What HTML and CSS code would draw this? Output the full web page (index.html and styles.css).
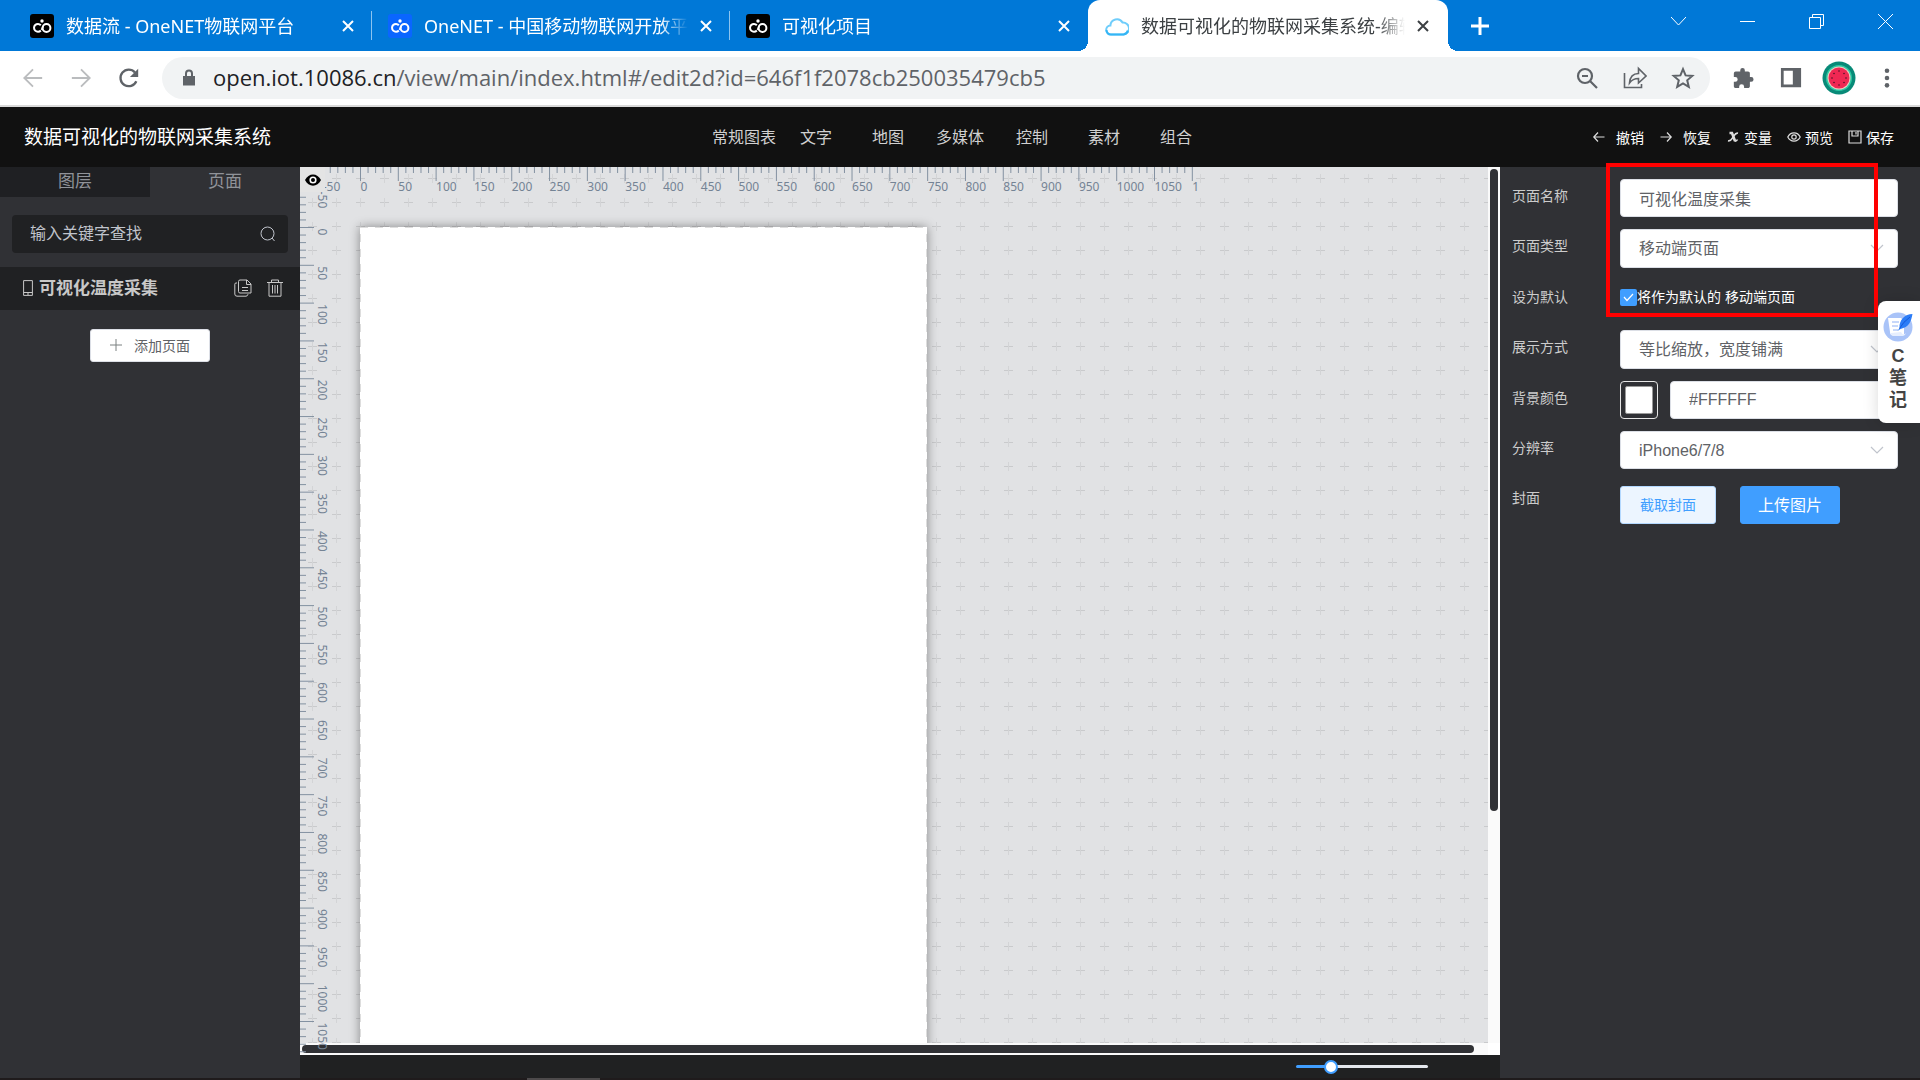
FILE: index.html
```html
<!DOCTYPE html>
<html lang="zh-CN">
<head>
  <meta charset="UTF-8" />
  <meta name="viewport" content="width=device-width, initial-scale=1.0"/>
  <title>数据可视化的物联网采集系统-编辑</title>
  <link rel="stylesheet" href="styles.css">
</head>
<body>
  <svg class="sprite" aria-hidden="true">
    <symbol id="onenet" viewBox="0 0 24 24">
      <path d="M10.8 11.2a3.900 3.900 0 1 0 0 5.300" fill="none" stroke="#fff" stroke-width="2"/>
      <circle cx="16.500" cy="14" r="3.900" fill="none" stroke="#fff" stroke-width="2"/>
      <path d="M13.200 12.200L11.500 15.800" stroke="#fff" stroke-width="1.600"/>
      <circle cx="12" cy="7" r="1.700" fill="#fff"/>
    </symbol>
    <symbol id="close" viewBox="0 0 12 12">
      <path d="M1 1l10 10M11 1L1 11" fill="none" stroke="currentColor" stroke-width="2"/>
    </symbol>
  </svg>

  <!-- browser tabs -->
  <header class="tab-strip">
    <div class="tab">
      <svg class="favicon dark"><use href="#onenet"/></svg>
      <span class="tab-title">数据流 - OneNET物联网平台</span>
      <button class="tab-close" aria-label="关闭"><svg><use href="#close"/></svg></button>
    </div>
    <div class="tab">
      <svg class="favicon blue"><use href="#onenet"/></svg>
      <span class="tab-title">OneNET - 中国移动物联网开放平</span>
      <button class="tab-close" aria-label="关闭"><svg><use href="#close"/></svg></button>
    </div>
    <div class="tab last">
      <svg class="favicon dark"><use href="#onenet"/></svg>
      <span class="tab-title">可视化项目</span>
      <button class="tab-close" aria-label="关闭"><svg><use href="#close"/></svg></button>
    </div>
    <div class="tab active">
      <svg class="favicon" viewBox="0 0 24 24" fill="none" stroke-width="2">
        <path d="M6 20.500a4.500 4.500 0 0 1-.6-9A6.500 6.500 0 0 1 17.500 8.500a5.500 5.500 0 0 1 1 12z" stroke="#6fcdfb"/>
        <path d="M1.500 16a4.500 4.500 0 0 0 4.500 4.500h12.500a5 5 0 0 0 4.300-4" stroke="#35b5f5"/>
      </svg>
      <span class="tab-title">数据可视化的物联网采集系统-编辑</span>
      <button class="tab-close" aria-label="关闭"><svg><use href="#close"/></svg></button>
    </div>
    <button class="new-tab" aria-label="新标签页">
      <svg viewBox="0 0 18 18"><path d="M9 0v18M0 9h18" stroke="#fff" stroke-width="3"/></svg>
    </button>
    <div class="window-buttons">
      <button aria-label="搜索标签页"><svg viewBox="0 0 15 15"><path d="M0 3l7.500 8L15 3"/></svg></button>
      <button aria-label="最小化"><svg viewBox="0 0 15 15"><path d="M0 7.500h15"/></svg></button>
      <button aria-label="还原"><svg viewBox="0 0 15 15"><path d="M.5 3.500h11v11H.5zM3.500 3.500v-3h11v11h-3"/></svg></button>
      <button aria-label="关闭窗口"><svg viewBox="0 0 15 15"><path d="M0 0l15 15M15 0L0 15"/></svg></button>
    </div>
  </header>

  <!-- address bar -->
  <div class="toolbar">
    <button class="cell faded" aria-label="后退"><svg viewBox="0 0 24 24"><path d="M22 12H3M12 2.500L2.500 12l9.500 9.500" fill="none" stroke="currentColor" stroke-width="2"/></svg></button>
    <button class="cell faded" aria-label="前进"><svg viewBox="0 0 24 24"><path d="M2 12h19M12 2.500l9.500 9.500-9.500 9.500" fill="none" stroke="currentColor" stroke-width="2"/></svg></button>
    <button class="cell" aria-label="重新加载"><svg viewBox="0 0 24 24"><path d="M20 15.500A9 9 0 1 1 18.500 6" fill="none" stroke="currentColor" stroke-width="2.500"/><path d="M22 2v9h-9z" fill="currentColor"/></svg></button>
    <div class="omnibox">
      <svg class="lock" viewBox="0 0 12 18"><path d="M0 7h12v9.500H0z" fill="#5f6368"/><path d="M3 8V4.500a3 3 0 0 1 6 0V8" fill="none" stroke="#5f6368" stroke-width="2"/></svg>
      <span class="url"><span class="host">open.iot.10086.cn</span>/view/main/index.html#/edit2d?id=646f1f2078cb250035479cb5</span>
      <button class="cell" aria-label="缩放"><svg viewBox="0 0 24 24" fill="none" stroke="currentColor" stroke-width="2.200"><circle cx="10" cy="10" r="7"/><path d="M15 15l7 7M7 10h6"/></svg></button>
      <button class="cell" aria-label="分享"><svg viewBox="0 0 24 24" fill="none" stroke="currentColor" stroke-width="1.600"><path d="M1.500 7v14.500h17V18"/><path d="M6.500 17c.5-6 4-9.500 9-9.500V2.500L23 10l-7.500 7v-4.500c-4 0-6.500 1-9 4.500z"/></svg></button>
      <button class="cell" aria-label="加入收藏"><svg viewBox="0 0 24 24" fill="none" stroke="currentColor" stroke-width="2"><path d="M12 3.200l2.600 6.200 6.700.5-5.100 4.400 1.600 6.500L12 17.300l-5.800 3.500 1.600-6.500-5.100-4.400 6.700-.5z"/></svg></button>
    </div>
    <button class="cell" aria-label="扩展程序"><svg viewBox="0 0 24 24"><path d="M21 11h-1.500V7c0-1.100-.9-2-2-2H14V3.500a2.500 2.500 0 0 0-5 0V5H4a2 2 0 0 0-2 2v3.800h1.500a2.700 2.700 0 0 1 0 5.400H2V21c0 1.100.9 2 2 2h3.800v-1.500a2.700 2.700 0 0 1 5.400 0V23h4.300c1.100 0 2-.9 2-2v-5H21a2.500 2.500 0 0 0 0-5z" fill="currentColor"/></svg></button>
    <button class="cell" aria-label="侧边栏"><svg viewBox="0 0 24 24"><path d="M1 1h22v21H1zM4 4v15h10V4z" fill="currentColor" fill-rule="evenodd"/></svg></button>
    <button class="cell avatar" aria-label="个人资料">
      <svg viewBox="0 0 34 34">
        <circle cx="17" cy="17" r="16.500" fill="#088a78"/><circle cx="17" cy="17" r="13" fill="#2cc9a4"/><circle cx="17" cy="17" r="11.500" fill="#eecbbf"/><circle cx="17" cy="17" r="10.500" fill="#ef2853"/>
        <g fill="#4a1426"><circle cx="17" cy="10" r=".8"/><circle cx="17" cy="24" r=".8"/><circle cx="10" cy="17" r=".8"/><circle cx="24" cy="17" r=".8"/><circle cx="12" cy="12.500" r=".8"/><circle cx="22" cy="12.500" r=".8"/><circle cx="12" cy="21.500" r=".8"/><circle cx="22" cy="21.500" r=".8"/></g>
      </svg>
    </button>
    <button class="cell" aria-label="菜单"><svg viewBox="0 0 24 24" fill="currentColor"><circle cx="12" cy="4" r="2.500"/><circle cx="12" cy="12" r="2.500"/><circle cx="12" cy="20" r="2.500"/></svg></button>
  </div>

  <!-- editor header -->
  <div class="app-header">
    <h1>数据可视化的物联网采集系统</h1>
    <nav>
      <a href="#">常规图表</a>
      <a href="#">文字</a>
      <a href="#">地图</a>
      <a href="#">多媒体</a>
      <a href="#">控制</a>
      <a href="#">素材</a>
      <a href="#">组合</a>
    </nav>
    <div class="actions">
      <button class="wide"><svg viewBox="0 0 14 14"><path d="M12.500 7H2M6 2.500L1.800 7 6 11.500"/></svg>撤销</button>
      <button class="wide"><svg viewBox="0 0 14 14"><path d="M1.500 7H12M8 2.500L12.200 7 8 11.500"/></svg>恢复</button>
      <button><svg viewBox="0 0 14 14"><path d="M3.500 3h2.500l3 8" stroke-width="2.600"/><path d="M12 3.200C9.500 2.500 8.500 5 7 7.200S4.500 11.500 2 10.800M8.500 11q2 .5 3-1.500" stroke-width="1.600"/></svg>变量</button>
      <button><svg viewBox="0 0 14 14"><path d="M.8 7C3.500 1.500 10.500 1.500 13.200 7 10.500 12.500 3.500 12.500.8 7z"/><circle cx="7" cy="7" r="2.200"/></svg>预览</button>
      <button><svg viewBox="0 0 14 14"><path d="M1 1h12v12H1zM4 1v5h6V1M8 2v2.500"/></svg>保存</button>
    </div>
  </div>

  <main class="editor">
    <aside class="left-panel">
      <div class="panel-tabs">
        <button class="inactive">图层</button>
        <button>页面</button>
      </div>
      <div class="search">
        <input type="text" placeholder="输入关键字查找" aria-label="输入关键字查找" />
        <svg viewBox="0 0 16 16"><circle cx="7.500" cy="7.500" r="6.500"/><path d="M12 12l2.500 3"/></svg>
      </div>
      <div class="page-item">
        <svg class="phone" viewBox="0 0 10 16"><path d="M.6.600h8.800v14.800H.6zM.6 12.500h8.800M4 14h2"/></svg>
        <span class="page-name">可视化温度采集</span>
        <button aria-label="复制"><svg viewBox="0 0 18 18"><path d="M6 1h7l4 4v9H6q-1.500 0-1.500-1.500v-10Q4.500 1 6 1zM12.500 1v4.500H17M8 8.500h6M8 11.500h6M3 4H2q-1.200 0-1.200 1.200V15q0 2.200 2.200 2.200h9q1.500 0 2-2"/></svg></button>
        <button aria-label="删除"><svg viewBox="0 0 18 18"><path d="M1 3.500h16M5.500 3V1h7v2M3 4v13.200h12V4M6.500 6v8.500M9 6v8.500M11.500 6v8.500"/></svg></button>
      </div>
      <button class="add-page"><svg viewBox="0 0 12 12"><path d="M6 0v12M0 6h12"/></svg>添加页面</button>
    </aside>

    <section class="center">
      <div class="workspace">
        <div class="stage">
          <div class="artboard"></div>
        </div>
        <div class="track vertical"><div class="thumb"></div></div>
        <div class="track horizontal"><div class="thumb"></div></div>
        <div class="scroll-corner"></div>
        <svg class="ruler ruler-x" id="rulerX"></svg>
        <svg class="ruler ruler-y" id="rulerY"></svg>
        <button class="ruler-toggle" aria-label="显示标尺">
          <svg viewBox="0 0 16 12"><path d="M0 6C3.500-1.500 12.500-1.500 16 6 12.500 13.500 3.500 13.500 0 6z"/><circle cx="8" cy="6" r="3.600" fill="#fff"/><circle cx="8" cy="6" r="2"/></svg>
        </button>
      </div>
      <div class="zoom-bar">
        <input type="range" min="0" max="100" value="24" aria-label="缩放比例" />
      </div>
    </section>

    <aside class="right-panel">
      <form>
        <div class="row">
          <label for="pageName">页面名称</label>
          <input class="field" type="text" id="pageName" value="可视化温度采集" />
        </div>
        <div class="row">
          <label for="pageType">页面类型</label>
          <select class="field" id="pageType"><option>移动端页面</option></select>
        </div>
        <div class="row">
          <span class="label">设为默认</span>
          <div class="check">
            <input type="checkbox" id="isDefault" checked />
            <label for="isDefault">将作为默认的 移动端页面</label>
          </div>
        </div>
        <div class="row">
          <label for="display">展示方式</label>
          <select class="field" id="display"><option>等比缩放，宽度铺满</option></select>
        </div>
        <div class="row">
          <label for="bgHex">背景颜色</label>
          <div class="color">
            <input type="color" value="#ffffff" aria-label="选择颜色" />
            <input class="field" type="text" id="bgHex" value="#FFFFFF" />
          </div>
        </div>
        <div class="row">
          <label for="resolution">分辨率</label>
          <select class="field short" id="resolution"><option>iPhone6/7/8</option></select>
        </div>
        <div class="row">
          <span class="label">封面</span>
          <div class="cover">
            <button type="button" class="plain">截取封面</button>
            <button type="button" class="primary">上传图片</button>
          </div>
        </div>
      </form>
      <div class="highlight"></div>
      <button class="notes">
        <svg viewBox="0 0 30 30">
          <circle cx="15" cy="15" r="14.500" fill="#a9c3f8"/>
          <path d="M5 6h13l3 3v14H9q-2 0-2-3z" fill="#fff"/>
          <path d="M18 20q2 4 5 1-1 3-3 3H10q-2 0-2-3z" fill="#e6eefe"/>
          <path d="M9 10h7M9 14h6M10 18h5" stroke="#8fb0f5"/>
          <path d="M29.500 2C22 2 16 8 16.500 16l-2 3 3-2C26 15 28 10 29.500 2z" fill="#2b7cf7"/>
          <path d="M27 5Q20 10 16.500 16.500" fill="none" stroke="#1557d8"/>
        </svg>
        <span>C</span>
        <span>笔</span>
        <span>记</span>
      </button>
    </aside>
  </main>
  <div class="taskbar"><div class="taskbar-item"></div></div>

  <script>
    const SVG_NS = "http://www.w3.org/2000/svg";
    const SCALE = 0.7562; // screen px per page unit
    const ORIGIN = 60;    // page origin, from the edge of the workspace

    function add(parent, name, attrs, text) {
      const el = document.createElementNS(SVG_NS, name);
      for (const key in attrs) el.setAttribute(key, attrs[key]);
      if (text !== undefined) el.textContent = text;
      parent.appendChild(el);
    }

    function drawRuler(svg, from, to, vertical) {
      for (let v = from; v <= to; v += 10) {
        const pos = ORIGIN + v * SCALE + 0.5;
        const major = v % 50 === 0;
        const len = major ? 14 : 6;
        add(svg, "line", vertical
          ? { x1: 0, x2: len, y1: pos, y2: pos }
          : { x1: pos, x2: pos, y1: 0, y2: len });
        if (major) {
          // only the first digit of the label fits at the end of the top ruler
          const label = !vertical && v === to ? String(v)[0] : v;
          add(svg, "text", vertical
            ? { transform: `translate(18 ${pos + 1}) rotate(90)` }
            : { x: pos, y: 24 }, label);
        }
      }
    }

    drawRuler(document.getElementById("rulerX"), -50, 1100, false);
    drawRuler(document.getElementById("rulerY"), -50, 1090, true);
  </script>
</body>
</html>
```
FILE: styles.css
```css
:root {
  --blue: #0078d7;
  --primary: #409eff;
  --panel: #303135;
  --panel-dark: #202123;
  --icon: #5f6368;
}

* {
  box-sizing: border-box;
}

body {
  margin: 0;
  height: 100vh;
  display: flex;
  flex-direction: column;
  overflow: hidden;
  font-family: "Liberation Sans", "Noto Sans CJK SC", sans-serif;
  font-size: 14px;
  background: var(--panel);
}

button {
  padding: 0;
  border: none;
  background: none;
  color: inherit;
  font: inherit;
  white-space: nowrap;
  cursor: pointer;
}

input,
select {
  font: inherit;
  margin: 0;
}

svg {
  display: block;
  flex: none;
}

.sprite {
  display: none;
}

/* browser tabs */
.tab-strip {
  display: flex;
  flex: none;
  height: 51px;
  padding-left: 14px;
  background: var(--blue);
  color: #fff;
  font-family: "Noto Sans", "Noto Sans CJK SC", sans-serif;
  font-size: 18px;
}

.tab {
  display: flex;
  align-items: center;
  flex: 0 1 358px;
  min-width: 0;
  height: 51px;
  padding-left: 16px;
}

.tab::after {
  content: "";
  width: 1px;
  height: 29px;
  margin-left: 11px;
  background: #8cc4f0;
}

.tab.last::after,
.tab.active::after {
  background: none;
}

.favicon {
  width: 24px;
  height: 24px;
  margin-right: 12px;
  border-radius: 3px;
}

.favicon.dark {
  background: #000;
}

.favicon.blue {
  background: #0a66ff;
}

.tab-title {
  flex: 1;
  overflow: hidden;
  white-space: nowrap;
  line-height: 26px;
  -webkit-mask-image: linear-gradient(to left, transparent, #000 28px);
  mask-image: linear-gradient(to left, transparent, #000 28px);
}

.tab-close {
  display: flex;
  align-items: center;
  justify-content: center;
  width: 24px;
  height: 24px;
  margin-left: 6px;
}

.tab-close svg {
  width: 12px;
  height: 12px;
}

.tab.active {
  position: relative;
  flex-basis: 360px;
  padding-left: 17px;
  background: #fff;
  color: #3c4043;
  border-radius: 12px 12px 0 0;
}

.tab.active::after {
  margin-left: 12px;
}

.tab.active::before {
  content: "";
  position: absolute;
  left: -10px;
  right: -10px;
  bottom: 0;
  height: 10px;
  background:
    radial-gradient(circle at 0 0, transparent 10px, #fff 10px) left / 10px 10px no-repeat,
    radial-gradient(circle at 100% 0, transparent 10px, #fff 10px) right / 10px 10px no-repeat;
}

.new-tab {
  width: 18px;
  margin-left: 23px;
}

.new-tab svg {
  width: 18px;
  height: 18px;
}

.window-buttons {
  display: flex;
  margin-left: auto;
}

.window-buttons button {
  display: flex;
  justify-content: center;
  align-items: center;
  width: 69px;
  height: 43px;
}

.window-buttons svg {
  width: 15px;
  height: 15px;
  fill: none;
  stroke: #fff;
}

/* address bar */
.toolbar {
  display: flex;
  align-items: center;
  flex: none;
  height: 56px;
  padding: 0 9px;
  background: #fff;
  border-bottom: 2px solid #dadada;
}

.cell {
  display: flex;
  justify-content: center;
  align-items: center;
  width: 48px;
  height: 42px;
  color: var(--icon);
}

.cell svg {
  width: 24px;
  height: 24px;
}

.toolbar > .cell svg {
  width: 22px;
  height: 22px;
}

.faded {
  color: #babcbe;
}

.toolbar > .avatar svg {
  width: 34px;
  height: 34px;
}

.omnibox {
  display: flex;
  align-items: center;
  flex: 1;
  height: 42px;
  margin: 0 9px;
  padding: 0 3px 0 21px;
  background: #f1f3f4;
  border-radius: 21px;
}

.lock {
  width: 12px;
  height: 18px;
  margin-right: 18px;
}

.url {
  flex: 1;
  padding-bottom: 2px;
  color: var(--icon);
  font-family: "Open Sans", "Noto Sans", sans-serif;
  font-size: 22px;
  line-height: 30px;
  white-space: nowrap;
}

.host {
  color: #202124;
}

/* editor header */
.app-header {
  display: grid;
  grid-template-columns: 1fr auto 1fr;
  align-items: center;
  flex: none;
  height: 60px;
  padding: 0 24px;
  background: #111;
  color: #fff;
}

.app-header h1 {
  margin: 0;
  padding-bottom: 4px;
  font-size: 19px;
  font-weight: 400;
}

.app-header nav {
  display: flex;
  padding-bottom: 3px;
}

.app-header nav a {
  width: 72px;
  color: #d0d0d0;
  font-size: 16px;
  text-align: center;
  text-decoration: none;
  white-space: nowrap;
}

.actions {
  display: flex;
  justify-content: flex-end;
  gap: 15px;
  padding-right: 2px;
}

.actions button {
  display: flex;
  align-items: center;
  gap: 4px;
}

.actions .wide {
  gap: 10px;
}

.actions svg {
  width: 14px;
  height: 14px;
  fill: none;
  stroke: #ddd;
  stroke-width: 1.2;
}

/* editor body */
.editor {
  display: flex;
  flex: 1;
  min-height: 0;
}

.left-panel {
  flex: none;
  width: 300px;
  background: var(--panel);
}

.panel-tabs {
  display: flex;
}

.panel-tabs button {
  flex: 1;
  height: 30px;
  color: #909399;
  font-size: 17px;
  line-height: 30px;
}

.panel-tabs .inactive {
  background: #1f2023;
}

.search {
  display: flex;
  align-items: center;
  height: 38px;
  margin: 18px 12px 14px;
  padding: 0 12px 0 18px;
  background: var(--panel-dark);
  border-radius: 4px;
}

.search input {
  flex: 1;
  min-width: 0;
  padding: 0;
  border: none;
  outline: none;
  background: none;
  color: #c0c4cc;
  font-size: 16px;
}

.search input::placeholder {
  color: #c0c4cc;
}

.search svg {
  width: 16px;
  height: 16px;
  fill: none;
  stroke: #c0c4cc;
}

.page-item {
  display: flex;
  align-items: center;
  height: 43px;
  padding: 0 16px 2px 23px;
  background: var(--panel-dark);
  color: #c8c8c8;
}

.page-item svg {
  width: 18px;
  height: 18px;
  fill: none;
  stroke: #c8c8c8;
}

.page-item .phone {
  width: 10px;
  height: 16px;
}

.page-item button {
  margin-left: 14px;
}

.page-name {
  flex: 1;
  margin-left: 6px;
  padding-bottom: 2px;
  font-size: 17px;
  font-weight: 700;
}

.add-page {
  display: flex;
  align-items: center;
  justify-content: center;
  gap: 12px;
  width: 120px;
  height: 33px;
  margin: 19px auto 0;
  padding-bottom: 2px;
  background: #fff;
  border: 1px solid #dcdfe6;
  border-radius: 3px;
  color: #606266;
}

.add-page svg {
  width: 12px;
  height: 12px;
  stroke: #7a8080;
}

.center {
  display: flex;
  flex: 1;
  flex-direction: column;
  min-width: 0;
}

.workspace {
  position: relative;
  display: grid;
  grid-template-columns: 1fr 12px;
  grid-template-rows: 1fr 12px;
  flex: 1;
  min-height: 0;
}

/* crosses every 24px */
.stage {
  position: relative;
  overflow: hidden;
  background-color: #e1e2e4;
  background-image: url("data:image/svg+xml,%3Csvg xmlns='http://www.w3.org/2000/svg' width='24' height='24'%3E%3Cpath d='M8 12.500h9' stroke='%23c9cacc'/%3E%3Cpath d='M12.500 8v9' stroke='%23d3d4d6'/%3E%3C/svg%3E");
  background-position: 0 -1px;
}

.artboard {
  position: absolute;
  left: 60px;
  top: 60px;
  width: 567px;
  height: 1008px;
  background:
    repeating-linear-gradient(to right, #ddd 0 8px, #fff 8px 15px) top / 100% 1px no-repeat,
    repeating-linear-gradient(to bottom, #fff 0 7px, #ddd 7px 15px) left / 1px 100% no-repeat,
    repeating-linear-gradient(to bottom, #fff 0 7px, #ddd 7px 15px) right / 1px 100% no-repeat,
    #fff;
  box-shadow: 0 0 10px rgba(0, 0, 0, 0.4);
}

.track {
  background: #fafafa;
  padding: 2px;
}

.track .thumb {
  background: var(--panel);
  border-radius: 4px;
}

.track.vertical .thumb {
  width: 8px;
  height: 73.6%;
}

.track.horizontal .thumb {
  width: 99%;
  height: 8px;
}

.scroll-corner {
  background: #fff;
}

.ruler {
  position: absolute;
  left: 0;
  top: 0;
  overflow: hidden;
}

.ruler line {
  stroke: #8391a1;
}

.ruler text {
  fill: #748394;
  font-family: "Noto Sans", sans-serif;
  font-size: 12px;
}

.ruler-x {
  width: 904px;
  height: 30px;
}

.ruler-y {
  width: 30px;
  height: 100%;
}

.ruler-toggle {
  position: absolute;
  left: 0;
  top: 0;
  display: flex;
  align-items: center;
  justify-content: center;
  width: 25px;
  height: 25px;
  background: #e4e4e4;
}

.ruler-toggle svg {
  width: 16px;
  height: 12px;
}

.zoom-bar {
  display: flex;
  align-items: center;
  justify-content: flex-end;
  height: 23px;
  padding-right: 72px;
  background: #202122;
}

.zoom-bar input {
  width: 132px;
  height: 3px;
  appearance: none;
  outline: none;
  border-radius: 2px;
  background: linear-gradient(to right, var(--primary) 27%, #e4e7ed 27%);
}

.zoom-bar input::-webkit-slider-thumb {
  appearance: none;
  width: 14px;
  height: 14px;
  border: 2px solid var(--primary);
  border-radius: 50%;
  background: #fff;
}

/* page settings */
.right-panel {
  position: relative;
  flex: none;
  width: 420px;
  padding: 12px 22px 0 12px;
  background: var(--panel);
}

.right-panel form {
  display: flex;
  flex-direction: column;
  gap: 12px;
}

.row {
  display: grid;
  grid-template-columns: 108px 1fr;
  align-items: start;
  min-height: 38px;
  color: #ccc;
  line-height: 35px;
}

.field {
  width: 100%;
  min-width: 0;
  height: 38px;
  padding: 0 18px;
  border: 1px solid #dcdfe6;
  border-radius: 4px;
  outline: none;
  background: #fff;
  color: #606266;
  font-size: 16px;
}

select.field {
  height: 39px;
  appearance: none;
  background: #fff url("data:image/svg+xml,%3Csvg xmlns='http://www.w3.org/2000/svg' width='14' height='9' fill='none' stroke='%23c0c4cc' stroke-width='1.200'%3E%3Cpath d='M1 1l6 6 6-6'/%3E%3C/svg%3E") right 13px center no-repeat;
}

select.short {
  height: 38px;
}

.check {
  display: flex;
  align-items: center;
  color: #fff;
}

.check input {
  width: 17px;
  height: 17px;
  appearance: none;
  border-radius: 2px;
  background: var(--primary) url("data:image/svg+xml,%3Csvg xmlns='http://www.w3.org/2000/svg' width='11' height='9' fill='none' stroke='white' stroke-width='1.200'%3E%3Cpath d='M1 4l3 3.500L10 1'/%3E%3C/svg%3E") center no-repeat;
}

.color {
  display: flex;
  gap: 12px;
}

.color input[type="color"] {
  flex: none;
  width: 38px;
  height: 38px;
  padding: 4px;
  appearance: none;
  border: 1px solid #e6e6e6;
  border-radius: 4px;
  background: none;
}

.color input::-webkit-color-swatch-wrapper {
  padding: 0;
}

.color input::-webkit-color-swatch {
  border: 1px solid #999;
  border-radius: 2px;
}

.cover {
  display: flex;
  gap: 24px;
  padding-top: 5px;
}

.cover button {
  width: 96px;
  height: 38px;
  border: 1px solid #b3d8ff;
  border-radius: 3px;
  background: #ecf5ff;
  color: var(--primary);
}

.cover .primary {
  width: 100px;
  border-color: var(--primary);
  background: var(--primary);
  color: #fff;
  font-size: 16px;
}

/* annotation frame over the first three rows */
.highlight {
  position: absolute;
  left: 106px;
  top: -4px;
  width: 272px;
  height: 154px;
  border: 4px solid #f00;
  pointer-events: none;
}

.notes {
  position: absolute;
  right: 0;
  top: 134px;
  display: flex;
  flex-direction: column;
  align-items: center;
  width: 42px;
  padding: 11px 2px 12px 0;
  background: #fff;
  border-radius: 8px 0 0 8px;
  box-shadow: 0 0 16px rgba(0, 0, 0, 0.15);
  color: #444;
  font-size: 18px;
  font-weight: 700;
  line-height: 22px;
}

.notes svg {
  width: 30px;
  height: 30px;
  margin-bottom: 3px;
}

.taskbar {
  flex: none;
  height: 2px;
  background: #1f1b1c;
}

.taskbar-item {
  width: 73px;
  height: 2px;
  margin-left: 527px;
  background: #4d4a4b;
}
```
